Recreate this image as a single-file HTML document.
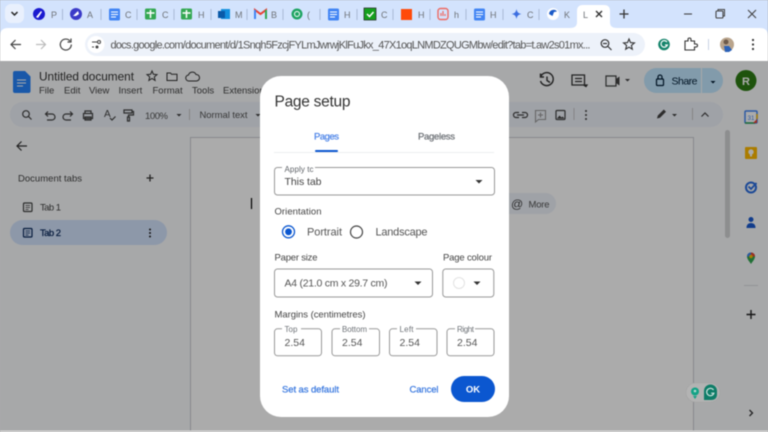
<!DOCTYPE html>
<html><head><meta charset="utf-8"><style>
html,body{margin:0;padding:0;width:768px;height:432px;overflow:hidden;background:#aaa}
svg{display:block;font-family:"Liberation Sans",sans-serif;filter:blur(.4px)}
text{white-space:pre}
.i{fill:none;stroke:#444;stroke-width:1.2}
.g{fill:#6f7378;font-size:9px}
.sep{stroke:#a8b9d6;stroke-width:1}
.m{stroke-width:.25px}
</style></head><body>
<svg width="768" height="432" viewBox="0 0 768 432" xmlns="http://www.w3.org/2000/svg">
<!-- tab strip -->
<rect width="768" height="62" fill="#d3e3fd"/>
<rect x="5" y="4" width="19" height="19" rx="6" fill="#e9f0fd"/>
<path d="M11.500 12l3 3 3-3" fill="none" stroke="#222" stroke-width="1.500"/>
<g class="sep"><path d="M62.500 9v11M101 9v11M137 9v11M174 9v11M211 9v11M247 9v11M283 9v11M320 9v11M357 9v11M393 9v11M430 9v11M466 9v11M503 9v11M539 9v11"/></g>
<circle cx="39" cy="14" r="6" fill="#1a1ad0"/><path d="M36 17l5-6 1 1-4 6z" fill="#fff"/>
<text x="51" y="18" class="g">P</text>
<circle cx="76" cy="14" r="6" fill="#3b3bc8"/><path d="M73 16l5-5 1 3-3 2z" fill="#fff"/>
<text x="87" y="18" class="g">A</text>
<rect x="109" y="8.500" width="11" height="12" rx="1.500" fill="#4285f4"/><path d="M111 12h7M111 14.500h7M111 17h5" stroke="#fff" stroke-width="1"/>
<text x="125" y="18" class="g">C</text>
<rect x="145" y="8.500" width="11" height="11" rx="1.500" fill="#34a853"/><path d="M150.500 10v8M146.500 13h8" stroke="#fff" stroke-width="1.500"/>
<text x="162" y="18" class="g">C</text>
<rect x="181" y="8.500" width="11" height="11" rx="1.500" fill="#34a853"/><path d="M186.500 10v8M182.500 13h8" stroke="#fff" stroke-width="1.500"/>
<text x="198" y="18" class="g">H</text>
<rect x="221" y="9" width="9" height="10" fill="#1490df"/><rect x="218" y="11" width="7" height="7" fill="#0a5aa8"/>
<text x="235" y="18" class="g">M</text>
<path d="M255 19v-9l5.500 4 5.500-4v9" fill="none" stroke="#ea4335" stroke-width="2"/><path d="M255 10v9" stroke="#4285f4" stroke-width="2"/><path d="M266 10v9" stroke="#34a853" stroke-width="2"/>
<text x="271" y="18" class="g">B</text>
<circle cx="297" cy="14" r="5.500" fill="#1fa463"/><circle cx="297" cy="14" r="2.500" fill="none" stroke="#fff"/>
<text x="307" y="18" class="g">(</text>
<rect x="328" y="8.500" width="11" height="12" rx="1.500" fill="#4285f4"/><path d="M330 12h7M330 14.500h7M330 17h5" stroke="#fff" stroke-width="1"/>
<text x="344" y="18" class="g">H</text>
<rect x="364" y="8" width="12" height="12" fill="#14a01e" stroke="#222" stroke-width=".7"/><path d="M367 14l2.500 2.500 4-4.500" fill="none" stroke="#fff" stroke-width="1.500"/>
<text x="381" y="18" class="g">C</text>
<rect x="401" y="9" width="11" height="11" fill="#ff4a0a"/>
<text x="418" y="18" class="g">H</text>
<rect x="438" y="8.500" width="10" height="11" rx="2.500" fill="none" stroke="#ee6a63" stroke-width="1.400"/><path d="M441 16v-3M443 16v-5M445 16v-2" stroke="#ee6a63" stroke-width="1.200"/>
<text x="454" y="18" class="g">h</text>
<rect x="474" y="8.500" width="11" height="12" rx="1.500" fill="#4285f4"/><path d="M476 12h7M476 14.500h7M476 17h5" stroke="#fff" stroke-width="1"/>
<text x="490" y="18" class="g">H</text>
<path d="M516.500 9c.7 3.300 1.700 4.300 5 5-3.300.7-4.300 1.700-5 5-.7-3.300-1.700-4.300-5-5 3.300-.7 4.300-1.700 5-5z" fill="#3c6ee0"/>
<text x="527" y="18" class="g">C</text>
<circle cx="553" cy="14" r="6" fill="#fff"/><path d="M549 14a4.500 4.500 0 0 1 8-2.500l-3 .5-1.500 4z" fill="#1a5ac8"/>
<text x="564" y="18" class="g">K</text>
<!-- active tab -->
<path d="M570 28c5 0 7-2 7-6V11q0-6 6-6h21q6 0 6 6v11c0 4 2 6 7 6z" fill="#fff"/>
<text x="583" y="18" class="g">L</text>
<path d="M596 11l6 6M602 11l-6 6" stroke="#333" stroke-width="1.400"/>
<path d="M624 9.500v9M619.500 14h9" stroke="#333" stroke-width="1.300"/>
<path d="M684 14h8" stroke="#444" stroke-width="1.100"/>
<rect x="716" y="11" width="7" height="7" rx="1" fill="none" stroke="#444" stroke-width="1.100"/><path d="M718 11v-1.500h6.500v6.500h-1.500" fill="none" stroke="#444" stroke-width="1"/>
<path d="M748 10l8 8M756 10l-8 8" stroke="#444" stroke-width="1.100"/>
<!-- address bar row -->
<path d="M0 36q0-8 8-8h752q8 0 8 8v26H0z" fill="#fff"/>
<path d="M21 44.500H11M15.500 40l-4.500 4.500 4.500 4.500" fill="none" stroke="#444" stroke-width="1.200"/>
<path d="M36 44.500h9M41 40l4.500 4.500L41 49" fill="none" stroke="#bbb" stroke-width="1.200"/>
<path d="M70 41a5.500 5.500 0 1 0 1.300 3.500M71 38.500v3.500h-3.500" fill="none" stroke="#444" stroke-width="1.200"/>
<rect x="85" y="33" width="560" height="23" rx="11.500" fill="#edf2fa"/>
<circle cx="96" cy="44.500" r="8.500" fill="#fff"/>
<path d="M92 42h5M92 47h2" stroke="#444" stroke-width="1"/><circle cx="99" cy="42" r="1.500" fill="none" stroke="#444"/><circle cx="97" cy="47" r="1.500" fill="#444"/>
<text x="110.500" y="48.500" font-size="11" fill="#555" textLength="480">docs.google.com/document/d/1Snqh5FzcjFYLmJwrwjKlFuJkx_47X1oqLNMDZQUGMbw/edit?tab=t.aw2s01mx...</text>
<circle cx="605" cy="43.500" r="3.800" fill="none" stroke="#333" stroke-width="1.200"/><path d="M608 46.500l3.500 3.500M603 43.500h4" stroke="#333" stroke-width="1.200"/>
<path d="M629 39l1.500 3.600 3.900.3-3 2.500.9 3.800-3.300-2-3.300 2 .9-3.800-3-2.500 3.900-.3z" fill="none" stroke="#333" stroke-width="1.100"/>
<circle cx="664" cy="44.500" r="5.800" fill="#15846b"/><path d="M667 42a3.300 3.300 0 1 0 .4 3h-2.400" fill="none" stroke="#fff" stroke-width="1.200"/>
<path d="M685 41h3v-1.500a1.500 1.500 0 0 1 3 0V41h3.500v3h1.500a1.500 1.500 0 0 1 0 3h-1.500v3H685z" fill="none" stroke="#333" stroke-width="1.100"/>
<path d="M708.500 39v11" stroke="#c8d3e3"/>
<circle cx="727" cy="44.500" r="7" fill="#b9a48c"/><circle cx="726" cy="42" r="2.500" fill="#6d5a4a"/><path d="M724 46h5l3 4-3 2h-4z" fill="#2b62b8"/>
<circle cx="753" cy="40" r="1.100" fill="#333"/><circle cx="753" cy="44.500" r="1.100" fill="#333"/><circle cx="753" cy="49" r="1.100" fill="#333"/>

<!-- docs app -->
<g>
<rect y="61" width="768" height="371" fill="#f9fbfd"/>
<path d="M13 73q0-2 2-2h10l5.500 5.500V91q0 2-2 2H15q-2 0-2-2z" fill="#2684fc"/><path d="M17 80h9M17 83h9M17 86h6" stroke="#fff" stroke-width="1"/>
<text x="39" y="80.500" font-size="11.800" fill="#333" textLength="95">Untitled document</text>
<path d="M152 71l1.400 3.300 3.600.3-2.700 2.300.8 3.500-3.100-1.900-3.100 1.900.8-3.500-2.700-2.300 3.600-.3z" fill="none" stroke="#333" stroke-width="1"/>
<path d="M167 73h3.500l1 1.300h5.500v6.200h-10z" fill="none" stroke="#333" stroke-width="1"/>
<path d="M189 81a3 3 0 0 1-.5-6 4 4 0 0 1 7.500-.5 3.200 3.200 0 0 1 .5 6.500z" fill="none" stroke="#333" stroke-width="1"/>
<g font-size="9.500" fill="#444">
<text x="39" y="93.500">File</text><text x="64" y="93.500">Edit</text><text x="89" y="93.500">View</text><text x="118.500" y="93.500">Insert</text><text x="152.500" y="93.500">Format</text><text x="192" y="93.500">Tools</text><text x="223" y="93.500">Extensions</text>
</g>
<!-- toolbar -->
<rect x="10" y="102" width="713" height="25" rx="12.500" fill="#edf2fa"/>
<circle cx="26" cy="114" r="3.300" class="i"/><path d="M28.500 116.500l3 3" class="i"/>
<path d="M46 114h6a3 3 0 0 1 0 6h-5M48 111.500l-2.500 2.500 2.500 2.500" class="i"/>
<path d="M72 114h-6a3 3 0 0 0 0 6h5M70 111.500l2.500 2.500-2.500 2.500" class="i"/>
<path d="M85 111h6v2.500h-6zM83.500 113.500h9v5h-9zM85 117h6v3h-6z" class="i"/>
<text x="104" y="117" font-size="10" fill="#444">A</text><path d="M110 118l2 2 3.500-3.500" class="i"/>
<path d="M124 110h8v3h-8zM132 111.500h1.500v3.500h-5v2M127.500 117h2v4h-2z" class="i"/>
<text x="145" y="119" font-size="9.500" fill="#555" textLength="23">100%</text>
<path d="M176.500 114h5l-2.500 2.500z" fill="#444"/>
<path d="M189.500 109v11" stroke="#c7c7c7"/>
<text x="199.500" y="118" font-size="9.500" fill="#555" textLength="48">Normal text</text>
<path d="M255.500 114h5l-2.500 2.500z" fill="#444"/>
<path d="M519 112.500h-3a2.500 2.500 0 0 0 0 5h3M522 112.500h3a2.500 2.500 0 0 1 0 5h-3M517 115h7" class="i"/>
<path d="M535.500 110.500h10v9h-7l-3 2.500zM540.500 112.500v5M538 115h5" fill="none" stroke="#999" stroke-width="1.100"/>
<rect x="556" y="110.500" width="9" height="9" rx="1" class="i"/><path d="M557 118.500l2.500-3 2 2 1-1 2 2z" fill="#444"/>
<path d="M574 108v12" stroke="#c7c7c7"/>
<circle cx="586" cy="111" r="1" fill="#444"/><circle cx="586" cy="115" r="1" fill="#444"/><circle cx="586" cy="119" r="1" fill="#444"/>
<path d="M657 118.500l.8-3 6-6 2.200 2.200-6 6z" fill="#444"/><path d="M672 114h5l-2.500 2.500z" fill="#444"/>
<path d="M692.500 108v12" stroke="#c7c7c7"/>
<path d="M701.500 116.500l3.500-3.500 3.500 3.500" class="i"/>
<!-- header right -->
<path d="M541 76a6.500 6.500 0 1 1-.5 5M540.500 73.500v3.500h3.500M547 76.500v4l3 2" fill="none" stroke="#333" stroke-width="1.400"/>
<path d="M572 75h12.500v10h2.500l-1 1.500-2.500-1.500H572zM575 78.500h7M575 81.500h7" fill="none" stroke="#333" stroke-width="1.300"/>
<path d="M606 76h10v10h-10z" class="i"/><path d="M616 79l3.500-2.500v9L616 83z" fill="#444"/>
<path d="M625 79h5l-2.500 2.500z" fill="#444"/>
<rect x="644" y="68" width="79" height="25" rx="12.500" fill="#c2e7ff"/>
<path d="M701.500 68v25" stroke="#f9fbfd" stroke-width="1"/>
<rect x="656.500" y="79" width="7" height="6.500" rx="1" fill="none" stroke="#001d35" stroke-width="1.200"/><path d="M658 79v-2a2 2 0 0 1 4 0v2" fill="none" stroke="#001d35" stroke-width="1.200"/>
<text x="671.500" y="84.500" font-size="10.500" fill="#001d35" textLength="26">Share</text>
<path d="M710.500 81h5l-2.500 2.500z" fill="#001d35"/>
<circle cx="746" cy="80.500" r="10.500" fill="#2e7d14"/><text x="746" y="85" font-size="11" fill="#fff" text-anchor="middle" font-weight="bold">R</text>
<!-- sidebar -->
<path d="M27 146H17M21.500 141.500L17 146l4.500 4.500" fill="none" stroke="#333" stroke-width="1.200"/>
<text x="18" y="181.500" font-size="9.500" fill="#444" textLength="64">Document tabs</text>
<path d="M150 174.500v7M146.500 178h7" stroke="#333" stroke-width="1.300"/>
<rect x="23.500" y="203" width="8.500" height="8.500" rx="1" class="i"/><path d="M25.500 205.500h4.500M25.500 207.500h4.500M25.500 209.500h3" stroke="#444" stroke-width=".8"/>
<text x="40" y="210.500" font-size="9.500" fill="#444" textLength="21">Tab 1</text>
<rect x="10" y="220" width="157" height="25" rx="12.500" fill="#d3e3fd"/>
<rect x="23.500" y="228.500" width="8.500" height="8.500" rx="1" fill="none" stroke="#0b2a5c" stroke-width="1.200"/><path d="M25.500 231h4.500M25.500 233h4.500M25.500 235h3" stroke="#0b2a5c" stroke-width=".8"/>
<text x="40" y="236" font-size="9.500" fill="#0b2a5c" stroke="#0b2a5c" class="m" textLength="21">Tab 2</text>
<circle cx="150" cy="229.500" r="1" fill="#222"/><circle cx="150" cy="233" r="1" fill="#222"/><circle cx="150" cy="236.500" r="1" fill="#222"/>
<!-- page -->
<rect x="190.500" y="137.500" width="503" height="300" fill="#fff" stroke="#c9cdd2"/>
<path d="M251.500 198v11" stroke="#000" stroke-width="1.200"/>
<rect x="470" y="193" width="86" height="21" rx="10.500" fill="#edf2fa"/>
<text x="511" y="208" font-size="12" fill="#444">@</text>
<text x="528.500" y="207.500" font-size="9.500" fill="#555" textLength="21">More</text>
<rect x="725" y="130" width="5" height="108" rx="2.500" fill="#d2d4d6"/>
<!-- side panel -->
<rect x="745" y="111" width="12" height="12" rx="1" fill="#fff" stroke="#4285f4" stroke-width="1.500"/><path d="M745 123h10" stroke="#34a853" stroke-width="1.500"/><path d="M757 114v5" stroke="#fbbc04" stroke-width="1.500"/><path d="M757 119v4h-4z" fill="#ea4335"/><text x="751" y="120" font-size="6" fill="#4285f4" text-anchor="middle">31</text>
<rect x="745" y="147" width="12" height="12" rx="1" fill="#ffba00"/><circle cx="751" cy="152" r="2.700" fill="#fff"/><rect x="750" y="154.500" width="2" height="2" fill="#fff"/>
<circle cx="751" cy="187.500" r="5" fill="none" stroke="#2b6de0" stroke-width="2"/><path d="M748.500 186.500l2.500 2.500 5.500-6" fill="none" stroke="#2b6de0" stroke-width="1.800"/>
<circle cx="751" cy="219.500" r="2.500" fill="#1a5ad0"/><path d="M746.500 228q0-5 4.500-5t4.500 5z" fill="#1a5ad0"/>
<path d="M751 264c-2-3-4-5-4-7.500a4 4 0 0 1 8 0c0 2.500-2 4.500-4 7.500z" fill="#34a853"/><path d="M747 256.500a4 4 0 0 1 4-4v4z" fill="#4285f4"/><path d="M751 252.500a4 4 0 0 1 4 4h-4z" fill="#ea4335"/><circle cx="751" cy="256.500" r="1.700" fill="#fbbc04"/>
<path d="M744 285.500h14" stroke="#dadce0"/>
<path d="M751 310v9M746.500 314.500h9" stroke="#222" stroke-width="1.400"/>
<path d="M749.500 410l3 3-3 3" fill="none" stroke="#333" stroke-width="1.300"/>
</g>
<!-- scrim -->
<rect y="61" width="768" height="371" fill="#000" opacity=".33"/>
<rect y="430.500" width="768" height="1.500" fill="#d8d8d8"/>
<!-- grammarly -->
<rect x="686" y="383" width="34" height="19" rx="9.500" fill="#b3b3b3" stroke="#a3a3a3" stroke-width=".6"/>
<circle cx="695" cy="391.500" r="4" fill="#13a386"/><circle cx="695" cy="391" r="1.300" fill="#b3dcd3"/><path d="M693 396h4l-2 3z" fill="#13a386"/>
<path d="M704 391a6.500 6.500 0 0 1 13 0v3q0 6-6 6h-7z" fill="#0f7d68"/><path d="M713.500 390a3.700 3.700 0 1 0 .4 3.200h-2.700" fill="none" stroke="#d4e7e2" stroke-width="1.100"/>
<!-- dialog -->
<rect x="260" y="76" width="249" height="341" rx="21" fill="#fff"/>
<text x="274.500" y="106.500" font-size="15.500" fill="#333" textLength="76">Page setup</text>
<text x="314" y="139.500" font-size="9.500" fill="#4f86e8" stroke="#4f86e8" class="m" textLength="25">Pages</text>
<text x="418" y="139.500" font-size="9.500" fill="#6f7378" stroke="#6f7378" class="m" textLength="37">Pageless</text>
<path d="M274 152.500h220" stroke="#eceef0"/>
<rect x="315" y="150" width="23" height="2" rx="1" fill="#0b57d0"/>
<g fill="none" stroke="#999" stroke-width="1">
<rect x="274.500" y="167.500" width="220" height="27.500" rx="3"/>
<rect x="274.500" y="269" width="158" height="28" rx="3"/>
<rect x="442.800" y="269" width="51" height="28" rx="3"/>
<rect x="274.500" y="328.800" width="47" height="27" rx="3"/>
<rect x="332" y="328.800" width="47.500" height="27" rx="3"/>
<rect x="389.500" y="328.800" width="47.500" height="27" rx="3"/>
<rect x="447" y="328.800" width="47" height="27" rx="3"/>
</g>
<g fill="#fff">
<rect x="282" y="165" width="33" height="5"/>
<rect x="282" y="326" width="19" height="5"/>
<rect x="340" y="326" width="29" height="5"/>
<rect x="397" y="326" width="19" height="5"/>
<rect x="455" y="326" width="20" height="5"/>
</g>
<text x="284.500" y="172" font-size="8" fill="#5f6368" textLength="29">Apply tc</text>
<text x="284.500" y="185" font-size="10.500" fill="#444" textLength="37">This tab</text>
<path d="M475.500 180h7l-3.500 3.500z" fill="#333"/>
<text x="274.500" y="214.500" font-size="9.500" fill="#444" textLength="47">Orientation</text>
<circle cx="288.500" cy="231.800" r="6" fill="none" stroke="#0b57d0" stroke-width="1.300"/><circle cx="288.500" cy="231.800" r="3.400" fill="#0b57d0"/>
<text x="307" y="235.500" font-size="11" fill="#555" textLength="35">Portrait</text>
<circle cx="356.500" cy="232" r="6" fill="none" stroke="#444" stroke-width="1.200"/>
<text x="375.500" y="235.500" font-size="11" fill="#555" textLength="52">Landscape</text>
<text x="274.500" y="260.500" font-size="9.500" fill="#444" textLength="43">Paper size</text>
<text x="443" y="260.500" font-size="9.500" fill="#444" textLength="49">Page colour</text>
<text x="284.500" y="286.500" font-size="10.500" fill="#555" textLength="103">A4 (21.0 cm x 29.7 cm)</text>
<path d="M414.500 281.500h7l-3.500 3.500z" fill="#333"/>
<circle cx="459" cy="283" r="5.500" fill="#fff" stroke="#e3e3e3"/>
<path d="M473.500 281.500h7l-3.500 3.500z" fill="#333"/>
<text x="274.500" y="317.500" font-size="9.500" fill="#444" textLength="91">Margins (centimetres)</text>
<g font-size="8" fill="#6f7378">
<text x="284.500" y="332" textLength="13">Top</text>
<text x="342" y="332" textLength="25">Bottom</text>
<text x="399.500" y="332" textLength="14">Left</text>
<text x="457" y="332" textLength="17">Right</text>
</g>
<g font-size="10.500" fill="#555">
<text x="284.500" y="346">2.54</text><text x="342" y="346">2.54</text><text x="399.500" y="346">2.54</text><text x="457" y="346">2.54</text>
</g>
<text x="282" y="392.500" font-size="9.500" fill="#3d7be0" stroke="#3d7be0" class="m" textLength="57">Set as default</text>
<text x="409.500" y="392.500" font-size="9.500" fill="#3d7be0" stroke="#3d7be0" class="m" textLength="29">Cancel</text>
<rect x="451" y="376" width="44" height="26" rx="13" fill="#0b57d0"/>
<text x="473" y="392.700" font-size="9.500" font-weight="bold" fill="#fff" text-anchor="middle">OK</text>
</svg>
</body></html>
